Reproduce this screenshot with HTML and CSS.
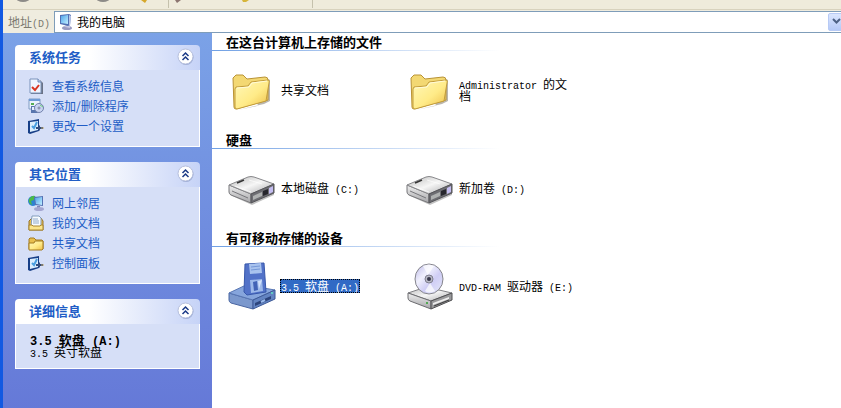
FILE: index.html
```html
<!DOCTYPE html>
<html lang="zh-CN">
<head>
<meta charset="utf-8">
<title>我的电脑</title>
<link rel="stylesheet" href="styles.css">
</head>
<body>
<svg class="defs" aria-hidden="true">
  <defs>
    <linearGradient id="gFolder" x1="0" y1="0" x2="1" y2="1"><stop offset="0" stop-color="#fff8ba"/><stop offset=".55" stop-color="#ffeb88"/><stop offset="1" stop-color="#edbd45"/></linearGradient>
    <linearGradient id="gTop" x1="0" y1="0" x2="1" y2="1"><stop offset="0" stop-color="#b9b9b9"/><stop offset=".5" stop-color="#f6f6f6"/><stop offset="1" stop-color="#a9a9ab"/></linearGradient>
    <linearGradient id="gSide" x1="0" y1="0" x2="0" y2="1"><stop offset="0" stop-color="#f0f0f0"/><stop offset="1" stop-color="#a5a5a8"/></linearGradient>
    <linearGradient id="gDisc" x1="0" y1="0" x2="1" y2="1"><stop offset="0" stop-color="#b9b6e6"/><stop offset=".35" stop-color="#f0f0fd"/><stop offset=".6" stop-color="#cfcdf5"/><stop offset="1" stop-color="#e6e9fb"/></linearGradient>
    <linearGradient id="gScreen" x1="0" y1="0" x2="1" y2="1"><stop offset="0" stop-color="#4fa4ea"/><stop offset="1" stop-color="#c2efff"/></linearGradient>
    <symbol id="folder" viewBox="0 -3 48 48">
      <path d="M10 41 36 35 42 32 42 11 40 10 29 37Z" fill="#8c8678" opacity=".6"/>
      <path d="M5 9 8 6h7l4 4 18-2q3 0 3 3v20L8 40q-2 0-2-2Z" fill="#f3d873" stroke="#b99336"/>
      <path d="M8 18 20 17l3-4 17-2q2 0 1 3l-3 18-29 8q-2 0-2-2L7 20Z" fill="url(#gFolder)" stroke="#c29c3b"/>
      <path d="M9 19l12-1 3-4 15-2" fill="none" stroke="#fffbd9"/>
    </symbol>
    <symbol id="disk" viewBox="0 0 48 48">
      <path d="M2 31 24 41 46 31v-3L24 36Z" fill="#777" opacity=".45"/>
      <path d="M1 21 23 30v9L3 31q-2-1-2-3Z" fill="url(#gSide)" stroke="#77777a"/>
      <path d="M1 21 20 13q3-1 6 0l20 7-23 10Z" fill="url(#gTop)" stroke="#88888b"/>
      <path d="M23 30 46 20v9L23 39Z" fill="#6d6d72" stroke="#555559"/>
      <path d="M25 32 34 28v4l-9 4Z" fill="#aeb0b0"/><path d="M35 27l5-2v5l-5 2Z" fill="#27272d"/><path d="M41 24l4-2v6l-4 2Z" fill="#c4bdf0"/>
      <path d="M9 19l7-3" stroke="#333" stroke-width="1.500"/><path d="M4 27l16 7" stroke="#77777b"/><path d="M21 16l13 4M7 22l16 6" stroke="#fff" opacity=".7"/>
    </symbol>
    <symbol id="floppy" viewBox="0 0 48 48">
      <path d="M1 31 25 38v9L3 41q-2-1-2-3Z" fill="#7b98cd" stroke="#4a66a2"/>
      <path d="M1 31 18 23l29 5-22 10Z" fill="#86a5dc" stroke="#5876b3"/>
      <path d="M25 38 47 28v9L25 47Z" fill="#6384c2" stroke="#3d5896"/>
      <path d="M27 41l16-7v3l-16 7Z" fill="#2c447c"/><path d="M33 40l4-2" stroke="#9bbbed" stroke-width="2"/><path d="M43 31h2" stroke="#60cbc1" stroke-width="2"/>
      <path d="M17 2 36 1l2 29-19 3-3-3Z" fill="#5272c8" stroke="#3858ab"/>
      <path d="M21 2l12-1 1 10-12 1Z" fill="#a9c3ee"/><path d="M23 5l9-1M23 8l9-1" stroke="#7698d8"/>
      <path d="M22 18l12-1 1 12-12 2Z" fill="#9db9ea"/><path d="M25 20l4-1 1 9-4 1Z" fill="#4263b6"/><path d="M30 19l4-1-3 9Z" fill="#d3e2fb"/>
    </symbol>
    <symbol id="dvd" viewBox="0 0 48 48">
      <path d="M2 31 20 25l26 6-21 8Z" fill="url(#gTop)" stroke="#818185"/>
      <path d="M2 31 25 39v8L4 39q-2-1-2-3Z" fill="url(#gSide)" stroke="#6c6c70"/>
      <path d="M25 39 46 31v7L25 47Z" fill="#99999b" stroke="#505052"/>
      <path d="M27 41l16-6v2l-16 6Z" fill="#eee"/><path d="M28 44l15-6" stroke="#3d3d3d"/><path d="M20 41h2" stroke="#52a952" stroke-width="2"/>
      <ellipse cx="23" cy="17" rx="14" ry="15" fill="url(#gDisc)" stroke="#85858c"/>
      <path d="M22 13 17 4q6-3 11 0ZM24 21l5 8q-6 3-10 0Z" fill="#fff" opacity=".7"/>
      <circle cx="23" cy="17" r="4" fill="#b9b9c6" stroke="#7e7e8d"/><circle cx="23" cy="17" r="2" fill="#39394c"/>
    </symbol>
    <symbol id="computer" viewBox="0 0 16 16">
      <ellipse cx="9" cy="14" rx="5" ry="2" fill="#9a9bc2"/><path d="M8 10l4 1v3l-5-1Z" fill="#c6c7e2"/>
      <path d="M2 1 11 0l2 1-1 10-2 1-8-2Z" fill="#526fb3"/><path d="M3 2l7-1v9l-7-1Z" fill="url(#gScreen)"/><path d="M11 1l2 1-1 9-1 1Z" fill="#b9c6e6"/>
    </symbol>
    <symbol id="check" viewBox="0 0 16 16">
      <path d="M3 2h9l3 3v11H3Z" fill="#6b7386"/><path d="M2 1h8l3 3v11H2Z" fill="#f0f5ff" stroke="#7b93bb"/><path d="M10 1v3h3" fill="#bed1ec" stroke="#6a87b6"/>
      <path d="M4 9l3 3 4-5" fill="none" stroke="#d93420" stroke-width="2"/>
    </symbol>
    <symbol id="programs" viewBox="0 0 16 16">
      <path d="M1 1h11v10H1Z" fill="#eaf2fc" stroke="#7f9bc2"/><path d="M1 2h11" stroke="#6f9bd7" stroke-width="2"/>
      <path d="M3 5h3v2H3ZM3 8h4v2H3Z" fill="#55ad54"/><path d="M3 8h7v7H3Z" fill="#5976ae"/><path d="M4 9h5v3H4Z" fill="#e6efff"/>
      <circle cx="11" cy="10" r="4.500" fill="#c9d4f1" stroke="#7281ab"/><circle cx="11" cy="10" r="1" fill="#fff" stroke="#6f7898"/><path d="M12 7l3 2" stroke="#6fd07c"/>
    </symbol>
    <symbol id="settings" viewBox="0 0 16 16">
      <path d="M0 3 11 1v12L2 16l-2-1Z" fill="#173f87"/><path d="M2 4l8-1v9l-8 2Z" fill="#dceefe"/>
      <path d="M4 8l2 2 3-6" fill="none" stroke="#4a9fe0" stroke-width="2"/><path d="M8 9h2l2-2v2h3v2h-3v2l-2-2H8Z" fill="#334d7d"/><path d="M13 10h3" stroke="#c3a76b"/>
    </symbol>
    <symbol id="network" viewBox="0 0 16 16">
      <circle cx="5" cy="6" r="5" fill="#2d83d2"/><path d="M1 4q3-4 6-3l-1 4-3 1 1 4Q0 8 1 4Z" fill="#4aba48"/>
      <path d="M6 2l9-1v10l-8-1Z" fill="#5572b4"/><path d="M7 3l7-1v8l-6-1Z" fill="url(#gScreen)"/><path d="M9 11h3v3H9Z" fill="#8087ba"/><ellipse cx="11" cy="14" rx="5" ry="2" fill="#a4a6d0"/>
    </symbol>
    <symbol id="docs" viewBox="0 0 16 16">
      <path d="M1 6l3-3h9l2 3v9H1Z" fill="#e8bd4d" stroke="#94732a"/><path d="M4 1h7l2 2v9H3Z" fill="#f7fbff" stroke="#839dbd"/><path d="M5 4h5M5 6h6M5 8h6" stroke="#8faac9"/><path d="M1 10h3l1 1h7l1-1h2v5H1Z" fill="#fbe58b" stroke="#a9862f"/>
    </symbol>
    <symbol id="smallfolder" viewBox="0 0 16 16">
      <path d="M1 4l1-1h4l2 2h6l1 1v8H1Z" fill="#e8bf4e" stroke="#a47c22"/><path d="M1 8h5l1-2h8v8l-1 1H1Z" fill="url(#gFolder)" stroke="#a47c22"/>
    </symbol>
    <symbol id="chevrons" viewBox="0 0 17 17">
      <circle cx="9" cy="9.500" r="7.500" fill="#6c7fb5" opacity=".5"/><circle cx="8.500" cy="8.500" r="7.500" fill="#fff" stroke="#b6bfdc"/>
      <path d="M5.500 8 8.500 5l3 3M5.500 12l3-3 3 3" fill="none" stroke="#1b3a87" stroke-width="1.500"/>
    </symbol>
  </defs>
</svg>

<div class="window">
  <div class="toolbar">
    <svg width="320" height="9" viewBox="0 0 320 9" aria-hidden="true">
      <ellipse cx="20" cy="-2" rx="7" ry="4" fill="#8d8b88"/><ellipse cx="100" cy="-2" rx="7" ry="4" fill="#8d8b88"/>
      <path d="M138 0h6l-2 3Z" fill="#d6a72a"/><path d="M172 0h6l-4 3Z" fill="#8c7570"/><path d="M239 0h7l-3 2h-3Z" fill="#d6b53a"/>
      <path d="M165.500 0v8M309.500 0v8" stroke="#c5c1ac"/>
    </svg>
  </div>
  <div class="addressbar">
    <label for="address">地址<span class="latin">(D)</span></label>
    <div class="combo">
      <svg class="icon" aria-hidden="true"><use href="#computer"/></svg>
      <input id="address" type="text" value="我的电脑">
      <button type="button" aria-label="展开地址列表"><svg width="9" height="7" viewBox="0 0 9 7"><path d="M1 1l3.500 3.500L8 1" fill="none" stroke="#4d6185" stroke-width="2"/></svg></button>
    </div>
  </div>
  <div class="content">
    <aside class="sidebar">
      <section class="panel">
        <header><h2>系统任务</h2><button type="button" aria-label="折叠系统任务"><svg width="17" height="17"><use href="#chevrons"/></svg></button></header>
        <ul>
          <li><a href="#"><svg class="icon"><use href="#check"/></svg>查看系统信息</a></li>
          <li><a href="#"><svg class="icon"><use href="#programs"/></svg>添加/删除程序</a></li>
          <li><a href="#"><svg class="icon"><use href="#settings"/></svg>更改一个设置</a></li>
        </ul>
      </section>
      <section class="panel">
        <header><h2>其它位置</h2><button type="button" aria-label="折叠其它位置"><svg width="17" height="17"><use href="#chevrons"/></svg></button></header>
        <ul>
          <li><a href="#"><svg class="icon"><use href="#network"/></svg>网上邻居</a></li>
          <li><a href="#"><svg class="icon"><use href="#docs"/></svg>我的文档</a></li>
          <li><a href="#"><svg class="icon"><use href="#smallfolder"/></svg>共享文档</a></li>
          <li><a href="#"><svg class="icon"><use href="#settings"/></svg>控制面板</a></li>
        </ul>
      </section>
      <section class="panel">
        <header><h2>详细信息</h2><button type="button" aria-label="折叠详细信息"><svg width="17" height="17"><use href="#chevrons"/></svg></button></header>
        <div class="details">
          <strong><span class="latin">3.5 </span>软盘<span class="latin"> (A:)</span></strong>
          <p><span class="latin">3.5 </span>英寸软盘</p>
        </div>
      </section>
    </aside>
    <main>
      <section class="group">
        <h2>在这台计算机上存储的文件</h2>
        <div class="items">
          <a class="item" href="#"><svg><use href="#folder"/></svg><span class="name">共享文档</span></a>
          <a class="item" href="#"><svg><use href="#folder"/></svg><span class="name"><span class="latin">Administrator </span>的文<br>档</span></a>
        </div>
      </section>
      <section class="group">
        <h2>硬盘</h2>
        <div class="items">
          <a class="item" href="#"><svg><use href="#disk"/></svg><span class="name">本地磁盘<span class="latin"> (C:)</span></span></a>
          <a class="item" href="#"><svg><use href="#disk"/></svg><span class="name">新加卷<span class="latin"> (D:)</span></span></a>
        </div>
      </section>
      <section class="group">
        <h2>有可移动存储的设备</h2>
        <div class="items">
          <a class="item selected" href="#"><svg><use href="#floppy"/></svg><span class="name"><span class="latin">3.5 </span>软盘<span class="latin"> (A:)</span></span></a>
          <a class="item" href="#"><svg><use href="#dvd"/></svg><span class="name"><span class="latin">DVD-RAM </span>驱动器<span class="latin"> (E:)</span></span></a>
        </div>
      </section>
    </main>
  </div>
</div>
</body>
</html>
```
FILE: styles.css
```css
* {
  box-sizing: border-box;
}

body {
  margin: 0;
  font: 12px/12px "Noto Sans CJK SC", sans-serif;
  color: #000;
  overflow: hidden;
}

h2,
p,
ul {
  margin: 0;
  padding: 0;
}

ul {
  list-style: none;
}

a {
  color: inherit;
  text-decoration: none;
}

button {
  padding: 0;
  border: 0;
  background: none;
}

.defs {
  position: absolute;
  width: 0;
  height: 0;
}

.latin {
  font-family: "Liberation Mono", monospace;
  font-size: 10px;
  line-height: 0;
  white-space: pre-wrap;
}

.icon {
  width: 16px;
  height: 16px;
  flex: none;
}

.window {
  display: flex;
  flex-direction: column;
  min-height: 100vh;
  border-left: 3px solid #1259e2;
}

.toolbar {
  height: 10px;
  background: #efebdb;
  border-bottom: 1px solid #d8d2bd;
}

.toolbar svg {
  display: block;
}

.addressbar {
  display: flex;
  align-items: center;
  height: 23px;
  padding-left: 5px;
  background: #efecdf;
  color: #7c7a70;
  overflow: hidden;
}

.addressbar label {
  width: 46px;
  flex: none;
  white-space: nowrap;
}

.combo {
  display: flex;
  flex: 1;
  align-items: center;
  height: 22px;
  margin-right: -6px;
  padding: 0 1px 0 3px;
  border: 1px solid #7f9db9;
  background: #fff;
}

.combo input {
  flex: 1;
  min-width: 0;
  height: 18px;
  padding: 0 3px;
  border: 0;
  outline: 0;
  background: none;
  font: inherit;
  color: #000;
}

.combo button {
  display: grid;
  place-items: center;
  width: 17px;
  height: 18px;
  border: 1px solid #b7caf5;
  border-radius: 2px;
  background: linear-gradient(#dbe6fe, #b5c9f7);
}

.content {
  display: flex;
  flex: 1;
}

.sidebar {
  display: flex;
  flex-direction: column;
  gap: 15px;
  width: 209px;
  flex: none;
  padding: 12px;
  background: linear-gradient(#7ba2e7, #6375d6 110%);
}

.panel header {
  display: flex;
  align-items: center;
  justify-content: space-between;
  height: 25px;
  padding: 0 6px 2px 14px;
  border-radius: 4px 4px 0 0;
  background: linear-gradient(90deg, #fff 40%, #c6d3f7);
}

.panel h2 {
  font-size: 13px;
  line-height: 16px;
  color: #215dc6;
}

.panel header svg {
  display: block;
}

.panel ul,
.details {
  border: 1px solid #fff;
  border-top: 0;
  background: #d6dff7;
}

.panel ul {
  padding: 6px 12px 10px;
}

.panel li a {
  display: flex;
  align-items: center;
  gap: 8px;
  height: 20px;
  color: #215dc6;
}

.details {
  padding: 10px 14px;
}

.details strong {
  display: block;
  font-size: 13px;
}

.details strong .latin {
  font-size: 12px;
}

main {
  flex: 1;
  min-width: 0;
  background: #fff;
}

.group h2 {
  height: 18px;
  padding-left: 14px;
  font-size: 13px;
  line-height: 17px;
  background: linear-gradient(90deg, #70a0e4, #fff) 0 100% / 288px 1px no-repeat;
}

.items {
  display: flex;
  height: 80px;
  padding: 0 16px 2px;
}

.item {
  display: flex;
  align-items: center;
  gap: 4px;
  width: 178px;
}

.item svg {
  width: 48px;
  height: 48px;
  flex: none;
}

.name {
  padding: 1px;
  white-space: nowrap;
}

.selected .name {
  background: #316ac5;
  color: #fff;
  outline: 1px dotted #000;
  outline-offset: -1px;
}
```
